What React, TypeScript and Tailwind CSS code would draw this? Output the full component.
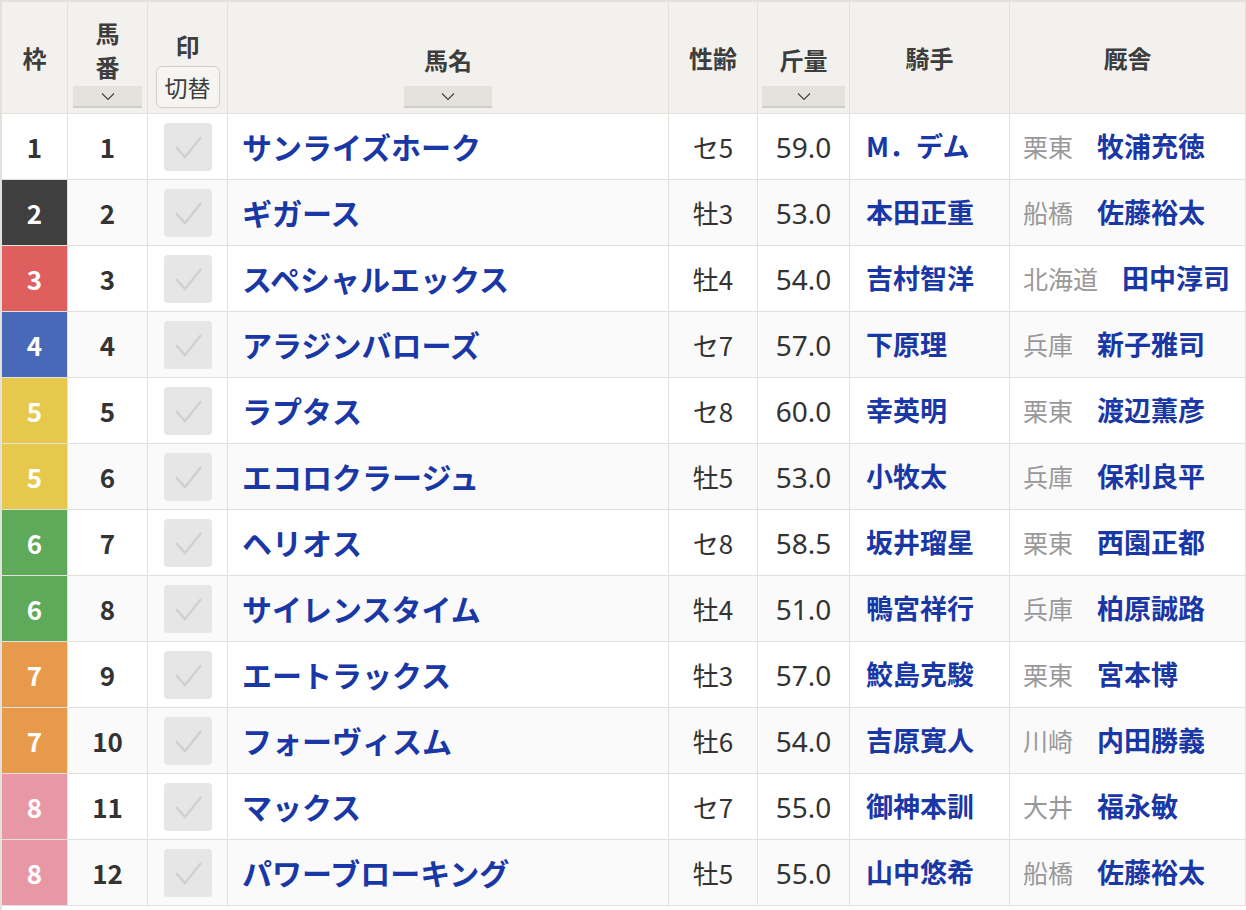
const rows = [
  { w: 1, n: 1, name: "サンライズホーク", sa: "セ5", kg: "59.0", j: "M．デム", loc: "栗東", t: "牧浦充徳" },
  { w: 2, n: 2, name: "ギガース", sa: "牡3", kg: "53.0", j: "本田正重", loc: "船橋", t: "佐藤裕太" },
  { w: 3, n: 3, name: "スペシャルエックス", sa: "牡4", kg: "54.0", j: "吉村智洋", loc: "北海道", t: "田中淳司" },
  { w: 4, n: 4, name: "アラジンバローズ", sa: "セ7", kg: "57.0", j: "下原理", loc: "兵庫", t: "新子雅司" },
  { w: 5, n: 5, name: "ラプタス", sa: "セ8", kg: "60.0", j: "幸英明", loc: "栗東", t: "渡辺薫彦" },
  { w: 5, n: 6, name: "エコロクラージュ", sa: "牡5", kg: "53.0", j: "小牧太", loc: "兵庫", t: "保利良平" },
  { w: 6, n: 7, name: "ヘリオス", sa: "セ8", kg: "58.5", j: "坂井瑠星", loc: "栗東", t: "西園正都" },
  { w: 6, n: 8, name: "サイレンスタイム", sa: "牡4", kg: "51.0", j: "鴨宮祥行", loc: "兵庫", t: "柏原誠路" },
  { w: 7, n: 9, name: "エートラックス", sa: "牡3", kg: "57.0", j: "鮫島克駿", loc: "栗東", t: "宮本博" },
  { w: 7, n: 10, name: "フォーヴィスム", sa: "牡6", kg: "54.0", j: "吉原寛人", loc: "川崎", t: "内田勝義" },
  { w: 8, n: 11, name: "マックス", sa: "セ7", kg: "55.0", j: "御神本訓", loc: "大井", t: "福永敏" },
  { w: 8, n: 12, name: "パワーブローキング", sa: "牡5", kg: "55.0", j: "山中悠希", loc: "船橋", t: "佐藤裕太" },
];

const waku: Record<number, string> = {
  1: "bg-white text-[#333]",
  2: "bg-[#3f3f3f] text-white",
  3: "bg-[#df5f5e] text-white",
  4: "bg-[#4a68b8] text-white",
  5: "bg-[#e6c94c] text-white",
  6: "bg-[#5ea95a] text-white",
  7: "bg-[#e89a4c] text-white",
  8: "bg-[#e898a5] text-white",
};

const cols = "grid grid-cols-[66px_80px_80px_441px_89px_92px_160px_236px]";

function Sort() {
  return (
    <div className="flex h-[22px] items-center justify-center border-b-2 border-[#cfcfca] bg-[#e3e2dd]">
      <svg width="16" height="9" viewBox="0 0 16 9" fill="none" stroke="#444" strokeWidth="1.2"><path d="M2 1.5l6 6 6-6" /></svg>
    </div>
  );
}

export default function App() {
  const cell = "border-r border-b border-[#e2e1dc] flex items-center";
  const hcell = "border-r border-b border-[#e2e1dc] flex flex-col items-center justify-end pb-[5px]";
  return (
    <div className="w-[1246px] h-[910px] bg-white border-l-2 border-t-2 border-[#e2e1dc]" style={{ fontFamily: '"Noto Sans CJK JP", "Noto Sans", sans-serif' }}>
      <div className={`${cols} h-[112px] bg-[#f2f1ed] font-bold text-[24px] text-[#3d3d3d]`}>
        <div className={`${cell} justify-center`}>枠</div>
        <div className={`${hcell} px-[5px]`}>
          <span className="leading-[34px]">馬</span><span className="leading-[34px]">番</span>
          <div className="w-full mt-[2px]"><Sort /></div>
        </div>
        <div className={`${hcell}`}>
          <span className="leading-[36px]">印</span>
          <div className="mt-[2px] rounded-md border border-[#cfcfca] bg-[#f6f5f2] px-[8px] text-[23px] font-normal leading-[40px]">切替</div>
        </div>
        <div className={`${hcell}`}>
          <span className="leading-[36px] mb-[8px]">馬名</span>
          <div className="w-[88px]"><Sort /></div>
        </div>
        <div className={`${cell} justify-center`}>性齢</div>
        <div className={`${hcell} px-[4px]`}>
          <span className="leading-[36px] mb-[8px]">斤量</span>
          <div className="w-full"><Sort /></div>
        </div>
        <div className={`${cell} justify-center`}>騎手</div>
        <div className={`${cell} justify-center`}>厩舎</div>
      </div>
      {rows.map((r, i) => (
        <div key={i} className={`${cols} h-[66px] ${i % 2 ? "bg-[#fafafa]" : "bg-white"}`}>
          <div className={`${cell} justify-center font-bold text-[26px] ${waku[r.w]}`}>{r.w}</div>
          <div className={`${cell} justify-center font-bold text-[26px] text-[#333]`}>{r.n}</div>
          <div className={`${cell} justify-center`}>
            <div className="flex h-[48px] w-[48px] items-center justify-center rounded-[4px] bg-[#e6e6e6]">
              <svg width="36" height="30" viewBox="0 0 36 30" fill="none" stroke="#d0d0d0" strokeWidth="2.5"><path d="M6 15l9 10L31 5" /></svg>
            </div>
          </div>
          <div className={`${cell} pl-[14px] font-bold text-[30px] text-[#1a37a6]`}>{r.name}</div>
          <div className={`${cell} justify-center text-[26px] text-[#333]`}>{r.sa}</div>
          <div className={`${cell} justify-center text-[28px] text-[#333]`} style={{ fontFamily: '"Noto Sans", sans-serif' }}>{r.kg}</div>
          <div className={`${cell} pl-[16px] font-bold text-[27px] text-[#1a37a6]`}>{r.j}</div>
          <div className={`${cell} pl-[13px] gap-[24px] text-[25px]`}>
            <span className="text-[#999]">{r.loc}</span>
            <span className="font-bold text-[27px] text-[#1a37a6]">{r.t}</span>
          </div>
        </div>
      ))}
    </div>
  );
}
